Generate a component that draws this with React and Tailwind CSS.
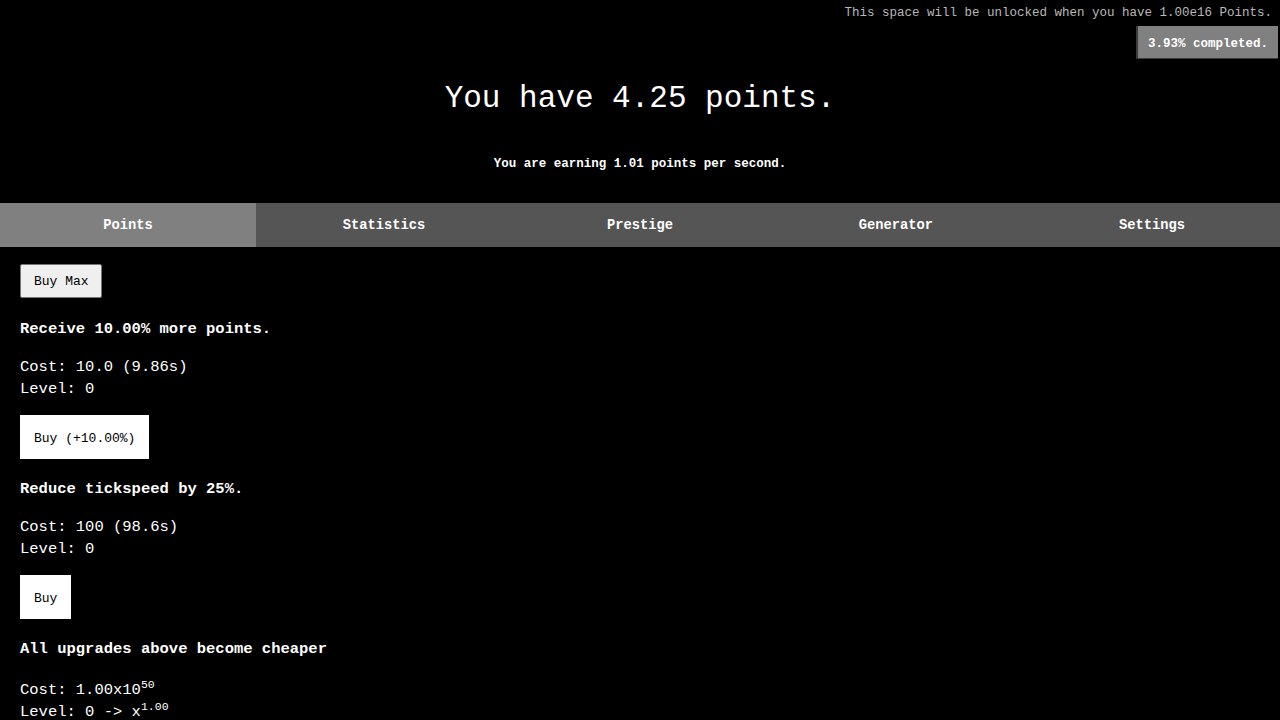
import React from "react";

const mono = { fontFamily: '"Liberation Mono", "DejaVu Sans Mono", monospace' };

const tabs = ["Points", "Statistics", "Prestige", "Generator", "Settings"];

function Upgrade({ title, cost, level, button, buttonWidth, first }) {
  return (
    <div>
      <div className={`${first ? "mt-[20px]" : "mt-[19px]"} text-[15.5px] font-bold leading-[22px] text-white`}>{title}</div>
      <div className="mt-[16px] text-[15.5px] leading-[22px] text-white">
        <div>{cost}</div>
        <div>{level}</div>
      </div>
      {button && (
        <button
          className={`mt-[15px] block h-[44px] ${buttonWidth} whitespace-nowrap bg-white px-[14px] pt-[3px] text-left text-[13px] text-black`}
          style={mono}
        >
          {button}
        </button>
      )}
    </div>
  );
}

export default function App() {
  return (
    <div className="min-h-[720px] w-full overflow-hidden bg-black text-white" style={mono}>
      <div className="h-[25px] pr-[8px] pt-[1px] text-right text-[12.5px] leading-[25px] text-[#b8b8b8]">
        This space will be unlocked when you have 1.00e16 Points.
      </div>
      <div className="mt-[1px] flex justify-end pr-[2px]">
        <div className="flex h-[33px] w-[142px] items-center justify-center border-l-2 border-b border-[#3c3c3c] bg-[#808080] pt-[4px] text-[12.5px] font-bold text-white">
          3.93% completed.
        </div>
      </div>
      <div className="mt-[20px] text-center text-[31px] leading-[40px] text-white">You have 4.25 points.</div>
      <div className="mt-[35px] text-center text-[12.5px] font-bold leading-[20px] text-white">
        You are earning 1.01 points per second.
      </div>
      <div className="mt-[29px] grid h-[44px] grid-cols-5">
        {tabs.map((t, i) => (
          <div
            key={t}
            className={`flex items-center justify-center pt-[2px] text-[13.75px] font-bold text-white ${i === 0 ? "bg-[#808080]" : "bg-[#555555]"}`}
          >
            {t}
          </div>
        ))}
      </div>
      <div className="pl-[20px]">
        <button
          className="mt-[17px] block h-[34px] w-[82px] whitespace-nowrap rounded-[2px] border border-[#767676] bg-[#efefef] px-[13px] pt-[1px] text-left text-[13px] text-black"
          style={mono}
        >
          Buy Max
        </button>
        <Upgrade
          first
          title="Receive 10.00% more points."
          cost="Cost: 10.0 (9.86s)"
          level="Level: 0"
          button="Buy (+10.00%)"
          buttonWidth="w-[129px]"
        />
        <Upgrade
          title="Reduce tickspeed by 25%."
          cost="Cost: 100 (98.6s)"
          level="Level: 0"
          button="Buy"
          buttonWidth="w-[51px]"
        />
        <div>
          <div className="mt-[19px] text-[15.5px] font-bold leading-[22px] text-white">All upgrades above become cheaper</div>
          <div className="mt-[19px] text-[15.5px] leading-[22px] text-white">
            <div>
              Cost: 1.00x10<sup className="text-[11.5px]">50</sup>
            </div>
            <div>
              Level: 0 -&gt; x<sup className="text-[11.5px]">1.00</sup>
            </div>
          </div>
        </div>
      </div>
    </div>
  );
}
